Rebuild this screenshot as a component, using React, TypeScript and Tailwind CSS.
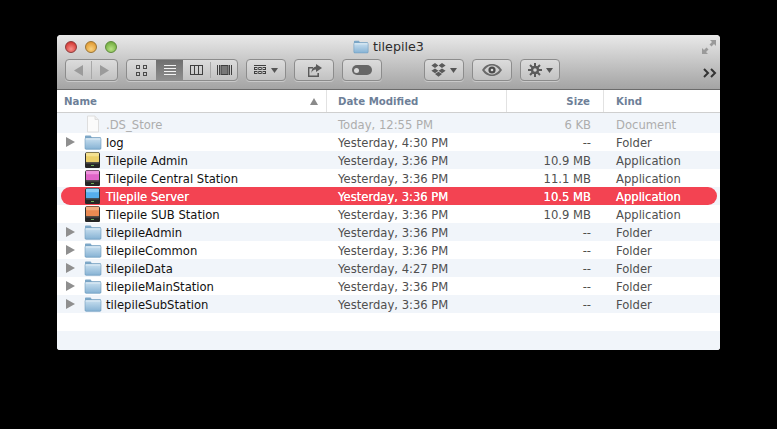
import React from "react";

const font = "font-['DejaVu_Sans',sans-serif]";

function Folder({ w = 18, h = 15 }: { w?: number; h?: number }) {
  return (
    <svg width={w} height={h} viewBox="0 0 18 15" className="shrink-0">
      <defs>
        <linearGradient id="fg" x1="0" y1="0" x2="0" y2="1">
          <stop offset="0" stopColor="#c9e0f0" />
          <stop offset="1" stopColor="#86b2d4" />
        </linearGradient>
      </defs>
      <path d="M1 3V1.600C1 1 1.400.6 2 .6h4.600l1.200 1.600H16c.6 0 1 .4 1 1V13c0 .7-.4 1.200-1 1.200H2c-.6 0-1-.5-1-1.200z" fill="#7ea8c8" />
      <rect x="1" y="3" width="16" height="11.200" rx="1" fill="url(#fg)" stroke="#6f9cbe" strokeWidth=".6" />
      <rect x="1.600" y="3.400" width="14.800" height="1" fill="#e6f1f9" />
    </svg>
  );
}

function AppIcon({ color, light }: { color: string; light: string }) {
  return (
    <svg width="18" height="18" viewBox="0 0 18 18" className="shrink-0">
      <rect x="1" y="1" width="15" height="16" rx="2.500" fill="#2f2f2f" />
      <rect x="2" y="1.800" width="13" height="9.700" rx="1" fill={color} />
      <rect x="2" y="1.800" width="13" height="3.500" rx="1" fill={light} />
      <rect x="1" y="11.500" width="15" height="5.500" rx="1.500" fill="#262626" />
      <rect x="2" y="11.500" width="13" height="1" fill="#555" />
      <rect x="7" y="14" width="3" height="1" fill="#6fae5a" />
    </svg>
  );
}

function DocIcon() {
  return (
    <svg width="18" height="18" viewBox="0 0 18 18" className="shrink-0">
      <path d="M3.500 1h7.500l3.500 3.500V17h-11z" fill="#fbfbfb" stroke="#dedede" />
      <path d="M11 1v3.500h3.500" fill="#eee" stroke="#dedede" />
    </svg>
  );
}

function Tri() {
  return (
    <svg width="9" height="10" viewBox="0 0 9 10" className="shrink-0">
      <path d="M0 0l9 5-9 5z" fill="#8f8f8f" />
    </svg>
  );
}

function Caret() {
  return (
    <svg width="7" height="5" viewBox="0 0 7 5" className="shrink-0">
      <path d="M0 0h7L3.500 5z" fill="#555" />
    </svg>
  );
}

const btn =
  "h-[22px] flex items-center justify-center rounded-[4px] border border-[#8c8c8c] bg-gradient-to-b from-[#dcdcdc] to-[#c2c2c2] shadow-[0_1px_0_rgba(255,255,255,0.35)]";

type Row = {
  name: string;
  date: string;
  size: string;
  kind: string;
  icon: "doc" | "folder" | "yellow" | "pink" | "blue" | "orange";
  tri?: boolean;
  sel?: boolean;
  dim?: boolean;
};

const rows: Row[] = [
  { name: ".DS_Store", date: "Today, 12:55 PM", size: "6 KB", kind: "Document", icon: "doc", dim: true },
  { name: "log", date: "Yesterday, 4:30 PM", size: "--", kind: "Folder", icon: "folder", tri: true },
  { name: "Tilepile Admin", date: "Yesterday, 3:36 PM", size: "10.9 MB", kind: "Application", icon: "yellow" },
  { name: "Tilepile Central Station", date: "Yesterday, 3:36 PM", size: "11.1 MB", kind: "Application", icon: "pink" },
  { name: "Tilepile Server", date: "Yesterday, 3:36 PM", size: "10.5 MB", kind: "Application", icon: "blue", sel: true },
  { name: "Tilepile SUB Station", date: "Yesterday, 3:36 PM", size: "10.9 MB", kind: "Application", icon: "orange" },
  { name: "tilepileAdmin", date: "Yesterday, 3:36 PM", size: "--", kind: "Folder", icon: "folder", tri: true },
  { name: "tilepileCommon", date: "Yesterday, 3:36 PM", size: "--", kind: "Folder", icon: "folder", tri: true },
  { name: "tilepileData", date: "Yesterday, 4:27 PM", size: "--", kind: "Folder", icon: "folder", tri: true },
  { name: "tilepileMainStation", date: "Yesterday, 3:36 PM", size: "--", kind: "Folder", icon: "folder", tri: true },
  { name: "tilepileSubStation", date: "Yesterday, 3:36 PM", size: "--", kind: "Folder", icon: "folder", tri: true },
];

function Icon({ k }: { k: Row["icon"] }) {
  if (k === "doc") return <DocIcon />;
  if (k === "folder") return <Folder />;
  if (k === "yellow") return <AppIcon color="#ecd06a" light="#f5e190" />;
  if (k === "pink") return <AppIcon color="#e065c8" light="#ee92dc" />;
  if (k === "blue") return <AppIcon color="#55aeec" light="#8accf5" />;
  return <AppIcon color="#ea8a52" light="#f3ac7e" />;
}

function FileRow({ r, odd }: { r: Row; odd: boolean }) {
  const base = r.sel ? "[text-shadow:0_0_0.6px_#fff]" : "";
  const nameCol = r.sel ? "text-white" : r.dim ? "text-[#adadad]" : "text-[#111]";
  const otherCol = r.sel ? "text-white" : r.dim ? "text-[#adadad]" : "text-[#4f4f4f]";
  return (
    <div className={`h-[18px] ${odd ? "bg-white" : "bg-[#f1f5fa]"}`}>
      <div className={`h-[18px] flex items-center leading-[15px] ${r.sel ? "bg-[#f34352] rounded-full ml-[4px] mr-[3px] pl-[5px]" : "pl-[9px]"} ${base}`}>
        <div className="w-[18px] flex items-center shrink-0">{r.tri && <Tri />}</div>
        <Icon k={r.icon} />
        <div className={`w-[225px] pl-[4px] pt-[3px] whitespace-nowrap shrink-0 ${nameCol}`}>{r.name}</div>
        <div className={`w-[180px] pl-[11px] pt-[3px] shrink-0 whitespace-nowrap ${otherCol}`}>{r.date}</div>
        <div className={`w-[84px] text-right pt-[3px] shrink-0 whitespace-nowrap ${otherCol}`}>{r.size}</div>
        <div className={`pl-[25px] pt-[3px] whitespace-nowrap ${otherCol}`}>{r.kind}</div>
      </div>
    </div>
  );
}

export default function App() {
  return (
    <div className={`w-[777px] h-[429px] bg-black pt-[35px] pl-[57px] ${font}`}>
      <div className="w-[663px] h-[315px] rounded-t-[4px] rounded-b-[3px] overflow-hidden bg-white flex flex-col">
        {/* Toolbar */}
        <div className="h-[55px] shrink-0 bg-gradient-to-b from-[#e9e9e9] to-[#a4a4a4] border-b border-[#6b6b6b] relative flex flex-col">
          <div className="h-[24px] flex items-center relative">
            <div className="flex items-center gap-[8px] pl-[8px]">
              <span className="w-[12px] h-[12px] rounded-full bg-[radial-gradient(circle_at_50%_70%,#f8918b,#c8201c)] border border-[#8c3a3a]" />
              <span className="w-[12px] h-[12px] rounded-full bg-[radial-gradient(circle_at_50%_70%,#f9d27e,#d98a1e)] border border-[#9a7434]" />
              <span className="w-[12px] h-[12px] rounded-full bg-[radial-gradient(circle_at_50%_70%,#b8e284,#5f9f2e)] border border-[#5e8a3a]" />
            </div>
            <div className="flex-1 flex justify-center items-center gap-[4px] text-[12.7px] text-[#2c2c2c] pr-[45px] pl-[4px]">
              <Folder w={16} h={14} />
              <span>tilepile3</span>
            </div>
            <svg width="16" height="16" viewBox="0 0 16 16" className="mr-[3px]">
              <path d="M9 1h6v6l-2-2-2.500 2.500-2-2L11 3zM7 15H1V9l2 2 2.500-2.500 2 2L5 13z" fill="#9a9a9a" />
            </svg>
          </div>
          <div className="flex items-center pl-[8px] h-[22px]">
            <div className={`${btn} w-[53px]`}>
              <div className="flex-1 flex justify-center">
                <svg width="9" height="11" viewBox="0 0 9 11"><path d="M9 0v11L0 5.500z" fill="#9b9b9b" /></svg>
              </div>
              <div className="w-px h-[18px] bg-[#a8a8a8]" />
              <div className="flex-1 flex justify-center">
                <svg width="9" height="11" viewBox="0 0 9 11"><path d="M0 0v11l9-5.500z" fill="#9b9b9b" /></svg>
              </div>
            </div>
            <div className={`${btn} w-[112px] ml-[8px] overflow-hidden !justify-start`}>
              <div className="w-[29px] flex justify-center">
                <svg width="11" height="11" viewBox="0 0 11 11" fill="none" stroke="#4a4a4a"><rect x=".5" y=".5" width="3" height="3" /><rect x="7.500" y=".5" width="3" height="3" /><rect x=".5" y="7.500" width="3" height="3" /><rect x="7.500" y="7.500" width="3" height="3" /></svg>
              </div>
              <div className="w-[27px] h-full flex justify-center items-center bg-gradient-to-b from-[#6f6f6f] to-[#8e8e8e]">
                <svg width="12" height="11" viewBox="0 0 12 11" stroke="#f2f2f2"><path d="M0 .5h12M0 3.500h12M0 6.500h12M0 9.500h12" /></svg>
              </div>
              <div className="w-[27px] flex justify-center">
                <svg width="13" height="10" viewBox="0 0 13 10" fill="none" stroke="#3f3f3f"><rect x=".5" y=".5" width="12" height="9" /><path d="M4.500 0v10M8.500 0v10" /></svg>
              </div>
              <div className="w-px h-[16px] bg-[#a8a8a8]" />
              <div className="flex-1 flex justify-center">
                <svg width="15" height="10" viewBox="0 0 15 10" fill="none" stroke="#3f3f3f"><path d="M.5 0v10M14.500 0v10M2.500 0v10M12.500 0v10" /><rect x="4" y="0.500" width="7" height="9" fill="#777" /></svg>
              </div>
            </div>
            <div className={`${btn} w-[40px] ml-[8px] gap-[5px]`}>
              <svg width="12" height="10" viewBox="0 0 12 10" fill="none" stroke="#3f3f3f"><path d="M0 .5h12" /><rect x=".5" y="2.500" width="2.400" height="2" /><rect x="4.800" y="2.500" width="2.400" height="2" /><rect x="9.100" y="2.500" width="2.400" height="2" /><rect x=".5" y="6.500" width="2.400" height="2" /><rect x="4.800" y="6.500" width="2.400" height="2" /><rect x="9.100" y="6.500" width="2.400" height="2" /></svg>
              <Caret />
            </div>
            <div className={`${btn} w-[40px] ml-[8px]`}>
              <svg width="15" height="13" viewBox="0 0 15 13"><path d="M1 3h5v1.400H2.400v7h8V9H12v4H1z" fill="#5a5a5a" /><path d="M9 0l6 4-6 4V5.600C6.500 5.600 5.200 6.800 4.400 9 4.400 5.400 6 3 9 2.600z" fill="#5a5a5a" /></svg>
            </div>
            <div className={`${btn} w-[40px] ml-[8px]`}>
              <div className="w-[20px] h-[10px] rounded-full bg-[#666] flex items-center pl-[2px]">
                <div className="w-[5px] h-[5px] rounded-full bg-[#d9d9d9]" />
              </div>
            </div>
            <div className={`${btn} w-[40px] ml-[42px] gap-[4px]`}>
              <svg width="15" height="14" viewBox="0 0 15 14" fill="#5a5a5a"><path d="M4 0l3.400 2.400L4 5 .4 2.600zM11 0l3.600 2.600L11 5 7.600 2.400zM4 5.400l3.400 2.400L4 10.200.4 7.800zM11 5.400l3.600 2.400L11 10.200 7.600 7.800zM4 11l3.500-2.300L11 11l-3.500 2.800z" /></svg>
              <Caret />
            </div>
            <div className={`${btn} w-[40px] ml-[8px]`}>
              <svg width="20" height="12" viewBox="0 0 20 12"><path d="M0 6c3-4.600 6.400-6 10-6s7 1.400 10 6c-3 4.600-6.400 6-10 6S3 10.600 0 6z" fill="#6a6a6a" /><path d="M2.400 6C5 2.900 7.500 1.600 10 1.600S15 2.900 17.600 6C15 9.100 12.500 10.400 10 10.400S5 9.100 2.400 6z" fill="#cfcfcf" /><circle cx="10" cy="6" r="3.600" fill="#4c4c4c" /><circle cx="10" cy="6" r="1.300" fill="#d8d8d8" /></svg>
            </div>
            <div className={`${btn} w-[40px] ml-[8px] gap-[4px]`}>
              <svg width="14" height="14" viewBox="0 0 14 14"><g stroke="#5a5a5a" strokeWidth="2"><path d="M7 0v14M0 7h14M2 2l10 10M12 2L2 12" /></g><circle cx="7" cy="7" r="4.200" fill="#5a5a5a" /><circle cx="7" cy="7" r="1.800" fill="#d4d4d4" /></svg>
              <Caret />
            </div>
            <div className="ml-auto mr-[3px] mt-[5px]">
              <svg width="14" height="10" viewBox="0 0 14 10" fill="none" stroke="#333" strokeWidth="2"><path d="M1 1l4 4-4 4M8 1l4 4-4 4" /></svg>
            </div>
          </div>
        </div>
        {/* Header */}
        <div className="h-[23px] shrink-0 bg-white border-b border-[#cfcfcf] flex items-center text-[10.2px] font-bold text-[#6e7f98]">
          <div className="w-[270px] h-full flex items-center justify-between pl-[7px] pr-[8px] pt-[1px] border-r border-[#e2e2e2]">
            <span>Name</span>
            <svg width="8" height="7" viewBox="0 0 8 7"><path d="M4 0l4 7H0z" fill="#8a8a8a" /></svg>
          </div>
          <div className="w-[180px] h-full flex items-center pl-[11px] pt-[1px] border-r border-[#e2e2e2]">Date Modified</div>
          <div className="w-[97px] h-full flex items-center justify-end pr-[13px] pt-[1px] border-r border-[#e2e2e2]">Size</div>
          <div className="pl-[12px] pt-[1px]">Kind</div>
        </div>
        {/* List */}
        <div className="flex-1 bg-[#f1f5fa] pt-[2px] text-[11.6px] flex flex-col">
          {rows.map((r, i) => (
            <FileRow key={r.name} r={r} odd={i % 2 === 1} />
          ))}
          <div className="h-[18px] bg-white shrink-0" />
        </div>
      </div>
    </div>
  );
}
